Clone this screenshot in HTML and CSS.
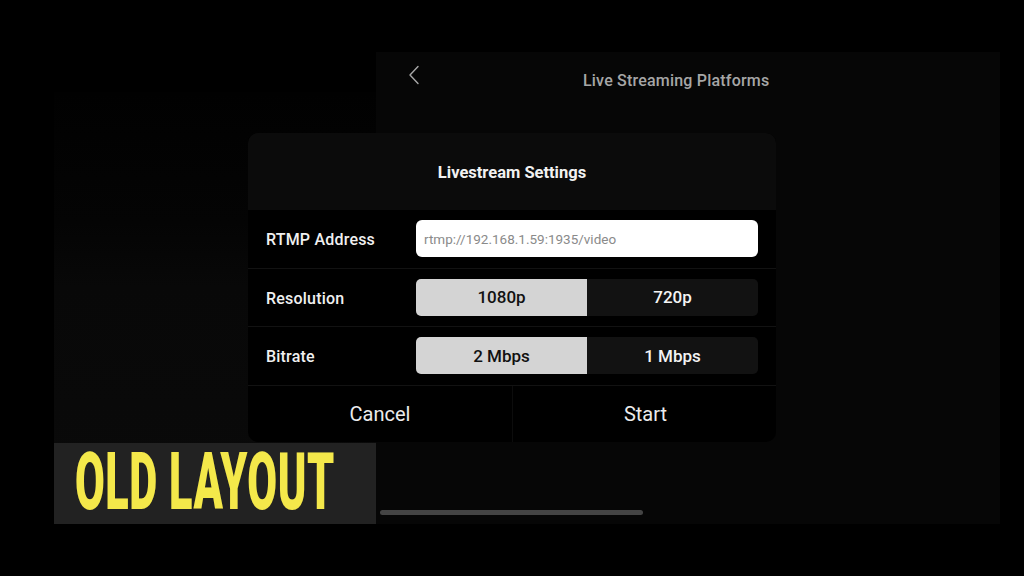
FILE: index.html
```html
<!DOCTYPE html>
<html lang="en">
<head>
<meta charset="utf-8">
<title>Livestream Settings</title>
<link rel="stylesheet" href="styles.css">
</head>
<body>
<div class="stage">
  <div class="screen">
    <div class="left-pane"></div>
    <div class="right-pane">
      <div class="topbar">
        <svg class="back" width="12" height="20" viewBox="0 0 12 20"><polyline points="10,1.5 2,10 10,18.5" fill="none" stroke="#a8a8a8" stroke-width="1.4" stroke-linecap="round" stroke-linejoin="round"/></svg>
        <span class="page-title">Live Streaming Platforms</span>
      </div>
      <div class="pane-body"></div>
      <div class="home-bar"></div>
    </div>
  </div>

  <div class="dialog">
    <div class="dialog-head">Livestream Settings</div>
    <div class="row">
      <span class="label">RTMP Address</span>
      <div class="input">rtmp://192.168.1.59:1935/video</div>
    </div>
    <div class="row">
      <span class="label">Resolution</span>
      <div class="segment">
        <span class="seg on">1080p</span>
        <span class="seg">720p</span>
      </div>
    </div>
    <div class="row">
      <span class="label">Bitrate</span>
      <div class="segment">
        <span class="seg on">2 Mbps</span>
        <span class="seg">1 Mbps</span>
      </div>
    </div>
    <div class="actions">
      <span class="action">Cancel</span>
      <span class="action">Start</span>
    </div>
  </div>

  <div class="badge"><span class="badge-text">OLD LAYOUT</span></div>
</div>
</body>
</html>
```

FILE: styles.css
```css
* { box-sizing: border-box; }

html, body {
  margin: 0;
  padding: 0;
  background: #000;
  width: 1024px;
  height: 576px;
  overflow: hidden;
  font-family: Roboto, "Noto Sans", "Liberation Sans", sans-serif;
}

.stage {
  position: relative;
  width: 1024px;
  height: 576px;
  padding: 52px 24px 52px 54px;
}

.screen {
  display: grid;
  grid-template-columns: 322px 624px;
  height: 472px;
}

.left-pane {
  margin-top: 40px;
  background: linear-gradient(180deg, #010101 0%, #040404 30%, #080808 45%, #0a0a0a 100%);
}

.right-pane {
  display: flex;
  flex-direction: column;
  background: #060606;
}

.topbar {
  display: flex;
  align-items: center;
  height: 56px;
  padding-left: 32px;
}

.back {
  display: block;
  margin-top: -10px;
}

.page-title {
  margin-left: 163px;
  margin-top: 1px;
  color: #a6a6a6;
  font-size: 16px;
  font-weight: 500;
  letter-spacing: 0.2px;
}

.pane-body { flex: 1; }

.home-bar {
  width: 263px;
  height: 5px;
  margin: 0 0 9px 4px;
  border-radius: 3px;
  background: #444;
}

/* dialog overlay */
.dialog {
  position: absolute;
  left: 248px;
  top: 133px;
  width: 528px;
  height: 309px;
  border-radius: 10px;
  background: #000;
  overflow: hidden;
  display: flex;
  flex-direction: column;
}

.dialog-head {
  height: 77px;
  background: #0b0b0b;
  display: flex;
  align-items: center;
  justify-content: center;
  color: #f2f2f2;
  font-size: 16.5px;
  font-weight: 700;
  padding-top: 1px;
}

.row {
  display: grid;
  grid-template-columns: 168px 342px;
  align-items: center;
  height: 58.5px;
  border-bottom: 1px solid #121212;
}

.label {
  padding-left: 18px;
  padding-top: 2px;
  color: #f0f0f0;
  font-size: 16px;
  font-weight: 500;
  letter-spacing: 0.2px;
}

.input {
  height: 37px;
  background: #fff;
  border-radius: 6px;
  color: #8a8a8a;
  font-size: 13.5px;
  display: flex;
  align-items: center;
  padding-left: 8px;
}

.segment {
  display: grid;
  grid-template-columns: 1fr 1fr;
  height: 37px;
  border-radius: 5px;
  overflow: hidden;
  background: #121212;
}

.seg {
  display: flex;
  align-items: center;
  justify-content: center;
  color: #f4f4f4;
  font-size: 17px;
  font-weight: 500;
}

.seg.on {
  background: #d4d4d4;
  color: #111;
}

.actions {
  flex: 1;
  display: grid;
  grid-template-columns: 1fr 1fr;
}

.action {
  display: flex;
  align-items: center;
  justify-content: center;
  color: #ececec;
  font-size: 20px;
  font-weight: 400;
}

.action + .action {
  border-left: 1px solid #0c0c0c;
  padding-left: 2px;
}

/* overlay badge */
.badge {
  position: absolute;
  left: 54px;
  top: 443px;
  width: 322px;
  height: 81px;
  background: #222;
  display: flex;
  align-items: center;
}

.badge-text {
  display: inline-block;
  margin: -4px 0 0 21px;
  color: #f4e84a;
  font-family: Roboto, "Liberation Sans", sans-serif;
  font-size: 80px;
  font-weight: 900;
  line-height: 1;
  letter-spacing: 1px;
  white-space: nowrap;
  transform: scaleX(0.54);
  transform-origin: left center;
}
```
